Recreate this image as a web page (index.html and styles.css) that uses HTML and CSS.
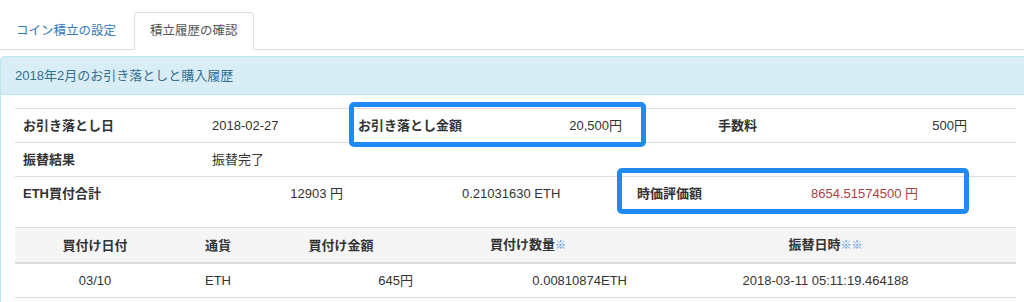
FILE: index.html
```html
<!DOCTYPE html>
<html lang="ja">
<head>
    <meta charset="UTF-8">
    <meta name="viewport" content="width=device-width, initial-scale=1.0">
    <title>積立履歴の確認</title>
    <link rel="stylesheet" href="styles.css">
</head>
<body>
    <ul class="tabs">
        <li><a href="#">コイン積立の設定</a></li>
        <li class="active"><a href="#">積立履歴の確認</a></li>
    </ul>

    <div class="panel">
        <div class="panel-heading">2018年2月のお引き落としと購入履歴</div>
        <div class="panel-body">
            <div class="summary">
                <table class="info-table">
                    <colgroup>
                        <col style="width:189px">
                        <col style="width:146px">
                        <col style="width:150px">
                        <col style="width:130px">
                        <col style="width:80px">
                        <col style="width:120px">
                        <col style="width:145px">
                        <col>
                    </colgroup>
                    <tr>
                        <th>お引き落とし日</th>
                        <td>2018-02-27</td>
                        <th>お引き落とし金額</th>
                        <td class="num">20,500円</td>
                        <td></td>
                        <th>手数料</th>
                        <td class="num">500円</td>
                        <td></td>
                    </tr>
                    <tr>
                        <th>振替結果</th>
                        <td>振替完了</td>
                        <td></td>
                        <td></td>
                        <td></td>
                        <td></td>
                        <td></td>
                        <td></td>
                    </tr>
                </table>
                <table class="info-table">
                    <colgroup>
                        <col style="width:189px">
                        <col style="width:147px">
                        <col style="width:278px">
                        <col style="width:174px">
                        <col>
                    </colgroup>
                    <tr>
                        <th>ETH買付合計</th>
                        <td class="num">12903 円</td>
                        <td class="coin">0.21031630 ETH</td>
                        <th>時価評価額</th>
                        <td class="price">8654.51574500 円</td>
                    </tr>
                </table>

                <!-- highlight marks drawn over the summary -->
                <div class="mark mark-amount"></div>
                <div class="mark mark-value"></div>
            </div>

            <table class="history">
                <colgroup>
                    <col style="width:160px">
                    <col style="width:86px">
                    <col style="width:160px">
                    <col style="width:214px">
                    <col>
                </colgroup>
                <thead>
                    <tr>
                        <th>買付け日付</th>
                        <th>通貨</th>
                        <th>買付け金額</th>
                        <th>買付け数量<span class="note">※</span></th>
                        <th>振替日時<span class="note">※※</span></th>
                    </tr>
                </thead>
                <tbody>
                    <tr>
                        <td>03/10</td>
                        <td>ETH</td>
                        <td class="num">645円</td>
                        <td class="num">0.00810874ETH</td>
                        <td>2018-03-11 05:11:19.464188</td>
                    </tr>
                    <tr>
                        <td></td>
                        <td></td>
                        <td></td>
                        <td></td>
                        <td></td>
                    </tr>
                </tbody>
            </table>
        </div>
    </div>
</body>
</html>
```

FILE: styles.css
```css
body {
    margin: 0;
    padding-top: 12px;
    font-family: "Liberation Sans", "Noto Sans CJK JP", sans-serif;
    font-size: 13px;
    line-height: 17px;
    color: #333;
    background: #fff;
    overflow: hidden;
    width: 1031px;
}
.tabs {
    list-style: none;
    margin: 0;
    padding: 0;
    display: flex;
    border-bottom: 1px solid #ddd;
    font-size: 12.5px;
}
.tabs li {
    margin-right: 2px;
    margin-bottom: -1px;
}
.tabs a {
    display: block;
    padding: 10px 15px 9px;
    color: #337ab7;
    text-decoration: none;
    border: 1px solid transparent;
    border-radius: 4px 4px 0 0;
}
.tabs .active a {
    color: #555;
    background: #fff;
    border-color: #ddd #ddd transparent;
}
.panel {
    margin-top: 6px;
    border: 1px solid #bce8f1;
    border-radius: 4px;
}
.panel-heading {
    padding: 10px 14px;
    background-color: #d9edf7;
    color: #31708f;
    border-bottom: 1px solid #bce8f1;
}
.panel-body {
    padding: 13px 14px 20px;
}
.summary {
    position: relative;
}
table {
    width: 100%;
    border-collapse: collapse;
    table-layout: fixed;
}
th, td {
    padding: 8px;
    border-top: 1px solid #ddd;
    text-align: left;
    white-space: nowrap;
}
th {
    font-weight: bold;
}
.num {
    text-align: right;
}
.coin {
    padding-left: 111px;
}
.price {
    color: #a94442;
}
.mark {
    position: absolute;
    border: 5px solid #1e8af2;
    border-radius: 5px;
    box-sizing: border-box;
}
.mark-amount {
    top: -6px;
    left: 334px;
    width: 297px;
    height: 45px;
}
.mark-value {
    top: 60px;
    left: 602px;
    width: 352px;
    height: 46px;
}
.history {
    margin-top: 17px;
}
.history th {
    text-align: center;
    background-color: #f5f5f5;
    border-bottom: 2px solid #ddd;
}
.history td {
    text-align: center;
}
.history td.num {
    text-align: right;
}
.note {
    color: #4a90d9;
    font-weight: normal;
    font-size: 11px;
}
```
